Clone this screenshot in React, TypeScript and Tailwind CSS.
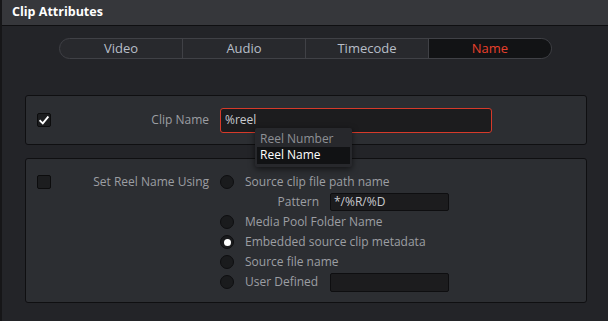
import React from 'react';

const tabs = ['Video', 'Audio', 'Timecode', 'Name'];

const Radio = ({ checked = false }: { checked?: boolean }) => (
  <span className="w-[14px] h-[14px] rounded-full bg-[#1a1b1d] border border-[#0e0e10] flex items-center justify-center shrink-0">
    {checked && <span className="w-[7px] h-[7px] rounded-full bg-white" />}
  </span>
);

const Checkbox = ({ checked = false }: { checked?: boolean }) => (
  <span className="w-[14px] h-[14px] rounded-[2px] bg-[#1c1d1f] border border-[#0c0c0d] flex items-center justify-center shrink-0">
    {checked && (
      <svg width="10" height="9" viewBox="0 0 10 9">
        <path d="M1.2 4.8 L3.8 7.4 L8.8 1.2" stroke="#fff" strokeWidth="1.9" fill="none" strokeLinecap="square" />
      </svg>
    )}
  </span>
);

const RadioRow = ({ label, checked = false }: { label: string; checked?: boolean }) => (
  <div className="h-[20px] flex items-center gap-[11px]">
    <Radio checked={checked} />
    <span>{label}</span>
  </div>
);

export default function App() {
  return (
    <div
      className="w-[608px] h-[321px] bg-[#232428] border-l-2 border-[#161618] overflow-hidden text-[12px] text-[#9c9ea3]"
      style={{ fontFamily: '"Open Sans", "Noto Sans", sans-serif' }}
    >
      {/* Header */}
      <div className="h-[26px] bg-[#36373b] border-b border-[#0f0f11] flex items-center pl-[10px]">
        <span className="text-[12.5px] font-bold text-white">Clip Attributes</span>
      </div>

      {/* Tabs */}
      <div className="mt-[12px] ml-[57px] w-[493px] h-[21px] rounded-full border border-[#404146] bg-[#28292d] flex overflow-hidden">
        {tabs.map((t, i) => (
          <div
            key={t}
            className={`flex-1 flex items-center justify-center text-[13px] ${
              i > 0 ? 'border-l border-[#404146]' : ''
            } ${t === 'Name' ? 'bg-[#121315] text-[#e8402c]' : 'text-[#b7bec8]'}`}
          >
            {t}
          </div>
        ))}
      </div>

      {/* Clip Name panel */}
      <div className="mt-[36px] ml-[23px] w-[562px] h-[50px] rounded-[3px] bg-[#2c2e32] border border-[#0f0f11] flex items-center pl-[11px]">
        <Checkbox checked />
        <span className="w-[159px] pr-[1px] text-right">Clip Name</span>
        <div className="relative ml-[10px]">
          <div className="w-[272px] h-[25px] rounded-[3px] bg-[#1c1c1e] border border-[#d63a2a] flex items-center pl-[4px] text-[#c9cbcf]">
            %reel
          </div>
          {/* Suggestion dropdown */}
          <div className="absolute left-[35px] top-[20px] w-[97px] h-[39px] bg-[#27282c] rounded-[2px] shadow-[0_2px_6px_rgba(0,0,0,0.6)] px-[2px] pt-[3px] z-10">
            <div className="h-[16px] flex items-center pl-[3px] text-[#8e9095]">Reel Number</div>
            <div className="h-[17px] flex items-center pl-[3px] bg-[#111214] text-white">Reel Name</div>
          </div>
        </div>
      </div>

      {/* Reel Name panel */}
      <div className="mt-[13px] ml-[23px] w-[562px] h-[145px] rounded-[3px] bg-[#2c2e32] border border-[#0f0f11] flex items-start pl-[11px] pt-[13px]">
        <div className="h-[20px] flex items-center">
          <Checkbox />
        </div>
        <div className="w-[159px] h-[20px] pr-[1px] flex items-center justify-end">Set Reel Name Using</div>
        <div className="ml-[10px] flex flex-col">
          <RadioRow label="Source clip file path name" />
          <div className="h-[20px] flex items-center">
            <span className="w-[99px] text-right">Pattern</span>
            <div className="ml-[11px] w-[119px] h-[18px] rounded-[2px] bg-[#1c1c1e] border border-[#0e0e10] flex items-center pl-[3px] text-[#c9cbcf]">
              */%R/%D
            </div>
          </div>
          <RadioRow label="Media Pool Folder Name" />
          <RadioRow label="Embedded source clip metadata" checked />
          <RadioRow label="Source file name" />
          <div className="h-[20px] flex items-center">
            <div className="w-[110px] flex items-center gap-[11px]">
              <Radio />
              <span>User Defined</span>
            </div>
            <div className="w-[119px] h-[19px] rounded-[2px] bg-[#1c1c1e] border border-[#0e0e10]" />
          </div>
        </div>
      </div>
    </div>
  );
}
